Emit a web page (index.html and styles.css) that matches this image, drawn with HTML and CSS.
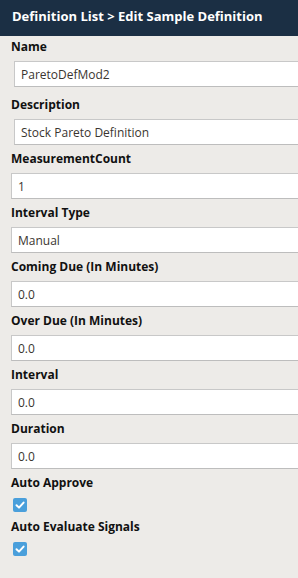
FILE: index.html
```html
<!DOCTYPE html>
<html lang="en">
<head>
    <meta charset="UTF-8" />
    <title>Edit Sample Definition</title>
    <link rel="stylesheet" href="styles.css">
</head>
<body>

    <header class="title-bar">Definition List &gt; Edit Sample Definition</header>

    <form class="def-form">
        <div class="field field-first">
            <label for="name">Name</label>
            <input type="text" id="name" class="indent" value="ParetoDefMod2" />
        </div>

        <div class="field">
            <label for="description">Description</label>
            <input type="text" id="description" class="indent" value="Stock Pareto Definition" />
        </div>

        <div class="field">
            <label for="measurementCount">MeasurementCount</label>
            <input type="text" id="measurementCount" value="1" />
        </div>

        <div class="field">
            <label for="intervalType">Interval Type</label>
            <input type="text" id="intervalType" value="Manual" />
        </div>

        <div class="field">
            <label for="comingDue">Coming Due (In Minutes)</label>
            <input type="text" id="comingDue" value="0.0" />
        </div>

        <div class="field">
            <label for="overDue">Over Due (In Minutes)</label>
            <input type="text" id="overDue" value="0.0" />
        </div>

        <div class="field">
            <label for="interval">Interval</label>
            <input type="text" id="interval" value="0.0" />
        </div>

        <div class="field">
            <label for="duration">Duration</label>
            <input type="text" id="duration" value="0.0" />
        </div>

        <div class="check-field">
            <label>Auto Approve</label>
            <span class="checkbox">
                <svg width="14" height="14" viewBox="0 0 14 14"><path d="M3.5 7.2 L6 9.6 L10.6 4.6" fill="none" stroke="#fff" stroke-width="2" stroke-linecap="round" stroke-linejoin="round"/></svg>
            </span>
        </div>

        <div class="check-field">
            <label>Auto Evaluate Signals</label>
            <span class="checkbox">
                <svg width="14" height="14" viewBox="0 0 14 14"><path d="M3.5 7.2 L6 9.6 L10.6 4.6" fill="none" stroke="#fff" stroke-width="2" stroke-linecap="round" stroke-linejoin="round"/></svg>
            </span>
        </div>
    </form>

</body>
</html>
```

FILE: styles.css
```css
body {
    margin: 0;
    font-family: "Open Sans", "Noto Sans", sans-serif;
    background-color: #edebe8;
    width: 298px;
    height: 578px;
    overflow: hidden;
}

.title-bar {
    height: 36px;
    line-height: 33px;
    padding-left: 12px;
    background-color: #1b2f44;
    color: white;
    font-size: 13px;
    font-weight: bold;
    white-space: nowrap;
}

.def-form {
    padding: 2px 0 0 11px;
}

label {
    display: block;
    height: 18px;
    line-height: 18px;
    font-size: 12px;
    font-weight: bold;
    color: #111;
    white-space: nowrap;
}

.field {
    margin-bottom: 5px;
}

    .field-first {
        margin-bottom: 9px;
    }

input {
    display: block;
    box-sizing: border-box;
    width: 100%;
    height: 26px;
    margin: 5px 0 0 0;
    padding: 0 6px;
    border: 1px solid #c8c8c8;
    border-right: none;
    border-bottom-color: #bdbdbd;
    background-color: white;
    font-family: "Open Sans", "Noto Sans", sans-serif;
    font-size: 12px;
    color: #3a3530;
    outline: none;
}

    input.indent {
        margin-left: 3px;
        width: calc(100% - 3px);
    }

.check-field {
    margin-bottom: 6px;
}

.checkbox {
    display: block;
    width: 14px;
    height: 14px;
    margin: 6px 0 0 2px;
    border-radius: 2px;
    background-color: #4a9fdb;
}

    .checkbox svg {
        display: block;
    }
```
